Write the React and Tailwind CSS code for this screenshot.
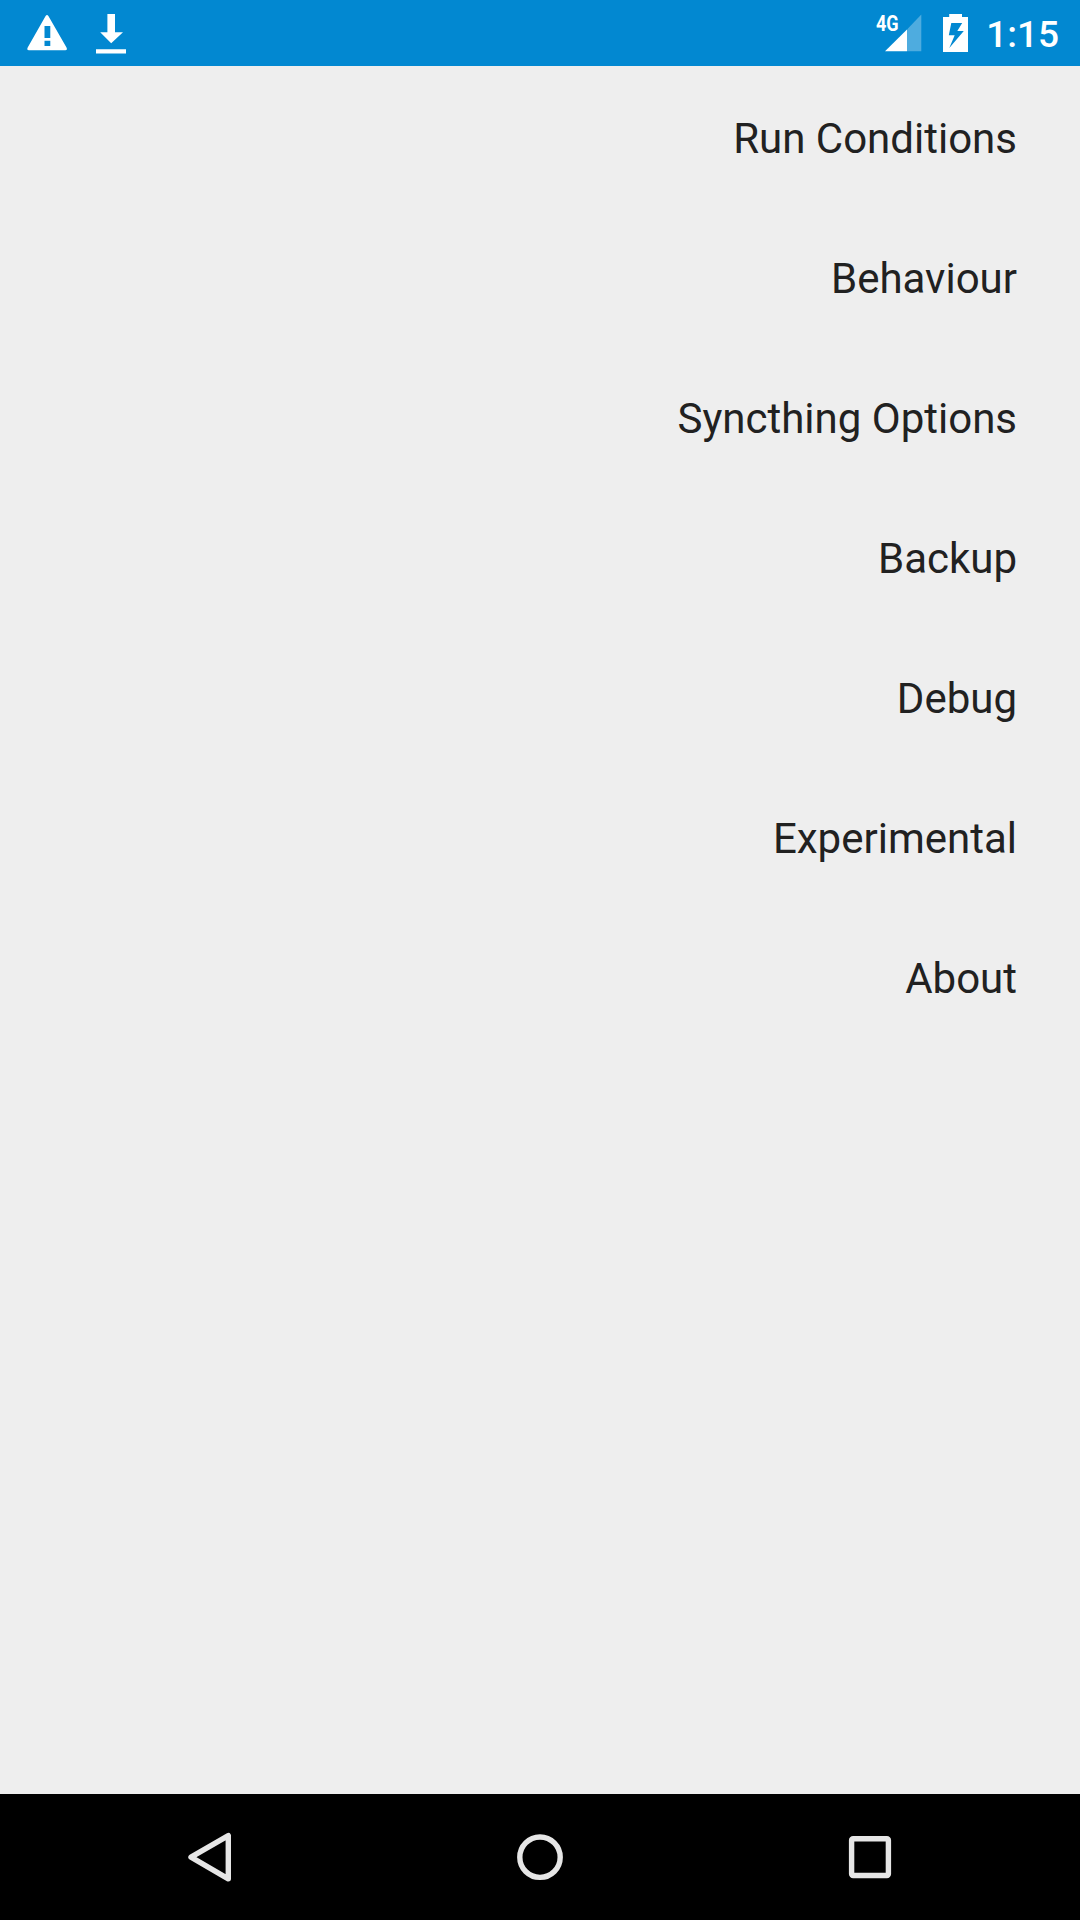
const items = [
  'Run Conditions',
  'Behaviour',
  'Syncthing Options',
  'Backup',
  'Debug',
  'Experimental',
  'About',
];

function StatusBar() {
  return (
    <header className="flex h-[66px] shrink-0 items-start justify-between bg-[#0288d1] text-white">
      <div className="flex pl-[27px] pt-[13px]">
        <svg width="40" height="40" viewBox="27 13 40 40" fill="currentColor">
          <path
            fillRule="evenodd"
            d="M45.6 15.9Q47 13.9 48.4 15.9L66.5 47.4Q67.8 50.3 65.2 50.3H29Q26.4 50.3 27.7 47.4ZM44.5 26V38H50.3V26ZM44.5 40.7V46H50.3V40.7Z"
          />
        </svg>
        <svg className="ml-[28px]" width="32" height="42" viewBox="95 13 32 42" fill="currentColor">
          <path d="M107.4 14H115V32.3H123L111.2 43.3L100.2 32.3H107.4ZM96 49.2H126V53.4H96Z" />
        </svg>
      </div>
      <div className="flex items-start">
        <div className="relative h-[66px] w-[46px]">
          <svg className="block" width="46" height="66" viewBox="876 0 46 66" fill="currentColor">
            <path d="M907 29.5L921.3 14.5V51.3H907Z" opacity="0.3" />
            <path d="M907 29.5V51.3H885Z" />
          </svg>
          <span className="absolute left-0 top-[12px] origin-left scale-x-[0.82] font-['Roboto',sans-serif] text-[22px] font-bold leading-[24px]">
            4G
          </span>
        </div>
        <svg className="ml-[21px] mt-[14px]" width="25" height="38" viewBox="943 14 25 38" fill="currentColor">
          <path
            fillRule="evenodd"
            d="M949.2 14H962V16.9H968V52H943V16.9H949.2ZM951.3 23L948.8 35.2H954.7L949.3 48L963.8 31H957.3L962.2 23Z"
          />
        </svg>
        <span className="ml-[18px] mr-[21px] mt-[12px] font-['Roboto',sans-serif] text-[37px] font-medium leading-[45px]">
          1:15
        </span>
      </div>
    </header>
  );
}

function NavigationBar() {
  return (
    <nav className="flex h-[126px] shrink-0 items-center justify-center gap-[230px] bg-black">
      <svg width="100" height="126" viewBox="0 0 100 126" fill="none" stroke="#e6e6e6" strokeWidth="5.4">
        <path d="M31 63.2L68.3 41.6V84.8Z" strokeLinejoin="round" />
      </svg>
      <svg width="100" height="126" viewBox="0 0 100 126" fill="none" stroke="#e6e6e6" strokeWidth="5.4">
        <circle cx="50" cy="63.2" r="20.2" />
      </svg>
      <svg width="100" height="126" viewBox="0 0 100 126" fill="none" stroke="#e6e6e6" strokeWidth="5.4">
        <rect x="31.6" y="44.7" width="36.8" height="36.8" rx="1.5" />
      </svg>
    </nav>
  );
}

export default function App() {
  return (
    <div className="flex h-[1920px] w-[1080px] flex-col bg-[#eeeeee] font-['Roboto',sans-serif]">
      <StatusBar />
      <main className="flex-1 pt-[3px]">
        <ul>
          {items.map((item) => (
            <li key={item} className="flex h-[140px] items-center justify-end pr-[63px] text-[42px] leading-[50px] text-[#212121]">
              {item}
            </li>
          ))}
        </ul>
      </main>
      <NavigationBar />
    </div>
  );
}
